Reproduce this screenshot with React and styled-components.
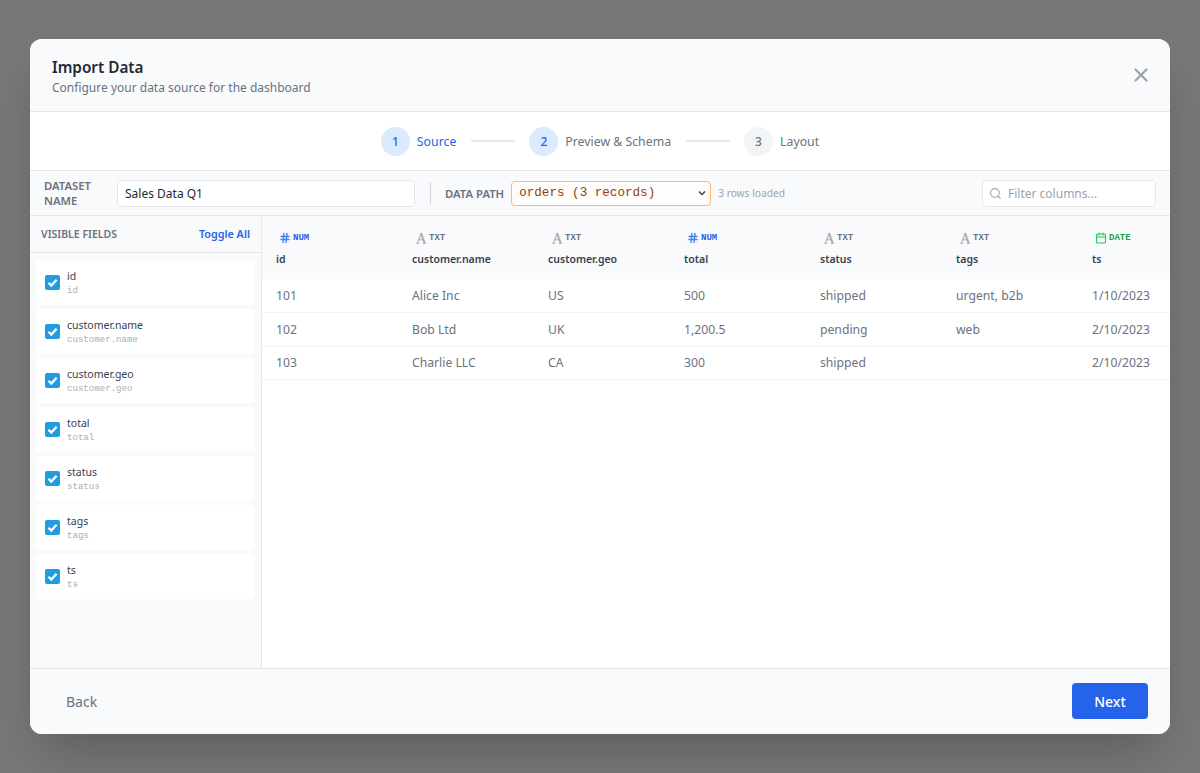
import React from "react";
import styled, { createGlobalStyle } from "styled-components";
import { X, Search, Hash, Calendar } from "lucide-react";

const Global = createGlobalStyle`
  html, body { margin: 0; padding: 0; height: 100%; }
  body { font-family: "Noto Sans", "Open Sans", sans-serif; background: #fff; }
  * { box-sizing: border-box; }
`;

const tick = `url("data:image/svg+xml,%3Csvg xmlns='http://www.w3.org/2000/svg' viewBox='0 0 15 15'%3E%3Cpath d='M3.5 7.8 6.3 10.6 11.6 4.8' fill='none' stroke='white' stroke-width='2.3'/%3E%3C/svg%3E")`;
const chevron = `url("data:image/svg+xml,%3Csvg xmlns='http://www.w3.org/2000/svg' viewBox='0 0 10 10'%3E%3Cpath d='M2 3.5 5 6.5 8 3.5' fill='none' stroke='%23374151' stroke-width='1.5'/%3E%3C/svg%3E")`;

const Overlay = styled.div`
  height: 773px;
  display: flex;
  align-items: center;
  justify-content: center;
  background: rgba(0, 0, 0, 0.53);
  overflow: hidden;
`;
const Modal = styled.div`
  width: 1140px;
  height: 695px;
  background: #fff;
  border-radius: 12px;
  display: flex;
  flex-direction: column;
  overflow: hidden;
  box-shadow: 0 25px 50px -12px rgba(0, 0, 0, 0.25);
`;
const Header = styled.header`
  height: 73px;
  flex: none;
  display: flex;
  align-items: center;
  justify-content: space-between;
  padding: 3px 22px 0;
  background: #f9fafb;
  border-bottom: 1px solid #e5e7eb;
`;
const Title = styled.h1`
  margin: 0;
  font-size: 15.3px;
  line-height: 22px;
  font-weight: 600;
  color: #1f2937;
`;
const Subtitle = styled.p`
  margin: 0;
  font-size: 12px;
  line-height: 20px;
  color: #6b7280;
`;
const Close = styled.button`
  border: 0;
  background: none;
  padding: 0;
  margin: -3px -4px 0 0;
  display: flex;
  color: #9ca3af;
`;
const Stepper = styled.nav`
  height: 59px;
  flex: none;
  display: flex;
  align-items: center;
  justify-content: center;
  border-bottom: 1px solid #e5e7eb;
`;
const Step = styled.div`
  display: flex;
  align-items: center;
  gap: 7px;
`;
const Bubble = styled.span`
  width: 29px;
  height: 29px;
  border-radius: 50%;
  display: flex;
  align-items: center;
  justify-content: center;
  font-size: 12px;
  font-weight: 500;
  background: ${(p) => (p.$on ? "#dbeafe" : "#f3f4f6")};
  color: ${(p) => (p.$on ? "#2563eb" : "#6b7280")};
`;
const StepLabel = styled.span`
  font-size: 12.3px;
  color: ${(p) => (p.$on ? "#2563eb" : "#6b7280")};
`;
const Connector = styled.span`
  width: 44px;
  height: 2px;
  margin: 0 14px 0 15px;
  background: #e5e7eb;
`;
const Toolbar = styled.div`
  height: 45px;
  flex: none;
  display: flex;
  align-items: center;
  padding: 0 14px;
  background: #f9fafb;
  border-bottom: 1px solid #e5e7eb;
`;
const FieldLabel = styled.label`
  font-size: 11.3px;
  line-height: 15px;
  font-weight: 600;
  color: #6b7280;
  text-transform: uppercase;
`;
const NameLabel = styled(FieldLabel)`
  width: 73px;
  flex: none;
`;
const NameInput = styled.input`
  width: 298px;
  height: 27px;
  padding: 0 7px;
  font: 12px "Noto Sans", sans-serif;
  color: #1f2937;
  background: #fff;
  border: 1px solid #e5e7eb;
  border-radius: 4px;
  outline: 0;
`;
const Divider = styled.span`
  width: 1px;
  height: 22px;
  margin: 0 14px 0 15px;
  background: #d1d5db;
`;
const PathSelect = styled.select`
  appearance: none;
  width: 200px;
  height: 25px;
  margin-left: 7px;
  padding: 0 4px 1px 7px;
  font: 12.6px "Liberation Mono", monospace;
  color: #92400e;
  background: #fffdfb ${chevron} no-repeat right 3px center / 10px 10px;
  border: 1px solid #fdba74;
  border-radius: 4px;
  outline: 0;
`;
const RowsNote = styled.span`
  margin-left: 7px;
  font-size: 10.2px;
  color: #9ca3af;
`;
const FilterBox = styled.div`
  width: 174px;
  height: 27px;
  margin-left: auto;
  padding: 0 6px;
  display: flex;
  align-items: center;
  gap: 6px;
  color: #9ca3af;
  background: #fff;
  border: 1px solid #e5e7eb;
  border-radius: 4px;
`;
const FilterInput = styled.input`
  flex: 1;
  min-width: 0;
  border: 0;
  padding: 0;
  outline: 0;
  background: none;
  font: 12px "Noto Sans", sans-serif;
  &::placeholder { color: #9ca3af; opacity: 1; }
`;
const Body = styled.div`
  flex: 1;
  min-height: 0;
  display: flex;
`;
const Sidebar = styled.aside`
  width: 232px;
  flex: none;
  background: #f9fafb;
  border-right: 1px solid #e5e7eb;
`;
const SideHead = styled.div`
  height: 37px;
  padding: 0 11px 1px;
  display: flex;
  align-items: center;
  justify-content: space-between;
  border-bottom: 1px solid #e5e7eb;
`;
const SideTitle = styled.span`
  font-size: 10.5px;
  font-weight: 600;
  color: #6b7280;
  text-transform: uppercase;
`;
const Toggle = styled.button`
  border: 0;
  padding: 0;
  background: none;
  font: 600 10.8px "Noto Sans", sans-serif;
  color: #2563eb;
`;
const FieldList = styled.div`
  padding: 7px 6px;
  display: flex;
  flex-direction: column;
  gap: 4px;
`;
const FieldRow = styled.label`
  height: 45px;
  padding: 0 9px;
  display: flex;
  align-items: center;
  gap: 7px;
  background: #fff;
  border-radius: 4px;
`;
const Check = styled.input`
  appearance: none;
  width: 15px;
  height: 15px;
  margin: 0;
  flex: none;
  border-radius: 2px;
  background: #1f9de0 ${tick} center / 15px 15px no-repeat;
`;
const FieldName = styled.div`
  font-size: 10.5px;
  line-height: 14px;
  color: #374151;
`;
const FieldPath = styled.div`
  margin-top: 2px;
  font: 9.1px/12px "Liberation Mono", monospace;
  color: #a9aeb7;
`;
const TableWrap = styled.div`
  flex: 1;
  min-width: 0;
  overflow: hidden;
`;
const Table = styled.table`
  width: 952px;
  table-layout: fixed;
  border-collapse: collapse;
`;
const Th = styled.th`
  width: 136px;
  height: 63px;
  padding: 0 14px;
  text-align: left;
  vertical-align: top;
  background: #f9fafb;
`;
const TypeTag = styled.div`
  height: 17px;
  margin-top: 13px;
  padding-left: 3px;
  display: flex;
  align-items: center;
  gap: 2px;
  font: 700 9px "Liberation Mono", monospace;
  color: ${(p) => p.$color};
  svg { color: ${(p) => p.$icon}; flex: none; }
`;
const ColName = styled.div`
  margin-top: 5px;
  font-size: 10.5px;
  line-height: 16px;
  font-weight: 600;
  color: #374151;
`;
const Td = styled.td`
  height: 33.6px;
  padding: 0 14px;
  font-size: 12.2px;
  color: #6b7280;
  white-space: nowrap;
  border-bottom: 1px solid #f3f4f6;
`;
const Footer = styled.footer`
  height: 66px;
  flex: none;
  padding: 0 22px 1px 36px;
  display: flex;
  align-items: center;
  justify-content: space-between;
  background: #f9fafb;
  border-top: 1px solid #e5e7eb;
`;
const BackBtn = styled.button`
  border: 0;
  padding: 0;
  background: none;
  font: 14px "Noto Sans", sans-serif;
  color: #6b7280;
`;
const NextBtn = styled.button`
  width: 76px;
  height: 36px;
  border: 0;
  border-radius: 4px;
  background: #2563eb;
  color: #fff;
  font: 500 14px "Noto Sans", sans-serif;
`;

const fields = ["id", "customer.name", "customer.geo", "total", "status", "tags", "ts"];
const types = { id: "n", "customer.name": "t", "customer.geo": "t", total: "n", status: "t", tags: "t", ts: "d" };
const rows = [
  ["101", "Alice Inc", "US", "500", "shipped", "urgent, b2b", "1/10/2023"],
  ["102", "Bob Ltd", "UK", "1,200.5", "pending", "web", "2/10/2023"],
  ["103", "Charlie LLC", "CA", "300", "shipped", "", "2/10/2023"],
];

function Tag({ kind }) {
  if (kind === "n")
    return <TypeTag $color="#2563eb" $icon="#3b82f6"><Hash size={12} strokeWidth={2.8} />NUM</TypeTag>;
  if (kind === "d")
    return <TypeTag $color="#16a34a" $icon="#22c55e"><Calendar size={12} strokeWidth={2.2} />DATE</TypeTag>;
  return (
    <TypeTag $color="#6b7280" $icon="#a8adb5">
      <svg width="12" height="12" viewBox="0 0 12 12" fill="none" stroke="currentColor">
        <path d="M2.6 11 6 1.8" strokeWidth="1.1" />
        <path d="M6 1.2 9.6 11" strokeWidth="1.9" />
        <path d="M3.6 7.8h4.6" strokeWidth="1.1" />
        <path d="M1.2 11.3h3M7.8 11.3h3.2" strokeWidth="1" />
      </svg>
      TXT
    </TypeTag>
  );
}

export default function App() {
  return (
    <>
      <Global />
      <Overlay>
        <Modal>
          <Header>
            <div>
              <Title>Import Data</Title>
              <Subtitle>Configure your data source for the dashboard</Subtitle>
            </div>
            <Close aria-label="Close"><X size={22} strokeWidth={2.5} /></Close>
          </Header>
          <Stepper>
            <Step><Bubble $on>1</Bubble><StepLabel $on>Source</StepLabel></Step>
            <Connector />
            <Step><Bubble $on>2</Bubble><StepLabel>Preview &amp; Schema</StepLabel></Step>
            <Connector />
            <Step><Bubble>3</Bubble><StepLabel>Layout</StepLabel></Step>
          </Stepper>
          <Toolbar>
            <NameLabel>Dataset Name</NameLabel>
            <NameInput defaultValue="Sales Data Q1" />
            <Divider />
            <FieldLabel>Data Path</FieldLabel>
            <PathSelect defaultValue="orders">
              <option value="orders">orders (3 records)</option>
            </PathSelect>
            <RowsNote>3 rows loaded</RowsNote>
            <FilterBox>
              <Search size={13} strokeWidth={2} />
              <FilterInput placeholder="Filter columns..." />
            </FilterBox>
          </Toolbar>
          <Body>
            <Sidebar>
              <SideHead>
                <SideTitle>Visible Fields</SideTitle>
                <Toggle>Toggle All</Toggle>
              </SideHead>
              <FieldList>
                {fields.map((f) => (
                  <FieldRow key={f}>
                    <Check type="checkbox" defaultChecked />
                    <div>
                      <FieldName>{f}</FieldName>
                      <FieldPath>{f}</FieldPath>
                    </div>
                  </FieldRow>
                ))}
              </FieldList>
            </Sidebar>
            <TableWrap>
              <Table>
                <thead>
                  <tr>
                    {fields.map((f) => (
                      <Th key={f}>
                        <Tag kind={types[f]} />
                        <ColName>{f}</ColName>
                      </Th>
                    ))}
                  </tr>
                </thead>
                <tbody>
                  {rows.map((r) => (
                    <tr key={r[0]}>
                      {r.map((c, i) => <Td key={i}>{c}</Td>)}
                    </tr>
                  ))}
                </tbody>
              </Table>
            </TableWrap>
          </Body>
          <Footer>
            <BackBtn>Back</BackBtn>
            <NextBtn>Next</NextBtn>
          </Footer>
        </Modal>
      </Overlay>
    </>
  );
}
